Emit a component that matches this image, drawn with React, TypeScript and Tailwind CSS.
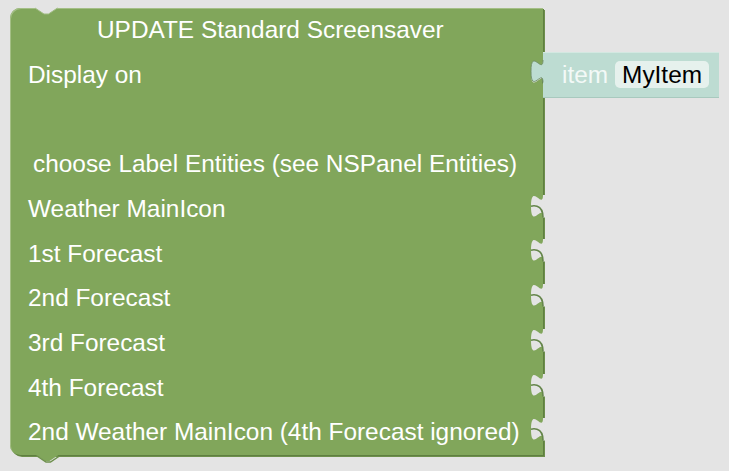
import React from 'react';

const inputs = [
  { label: 'Weather MainIcon' },
  { label: '1st Forecast' },
  { label: '2nd Forecast' },
  { label: '3rd Forecast' },
  { label: '4th Forecast' },
  { label: '2nd Weather MainIcon (4th Forecast ignored)' },
];

// blockly puzzle tab, right edge at x=8, drawn downward
const TAB = 'M8,0 C8,10 0,-8.5 0,7.5 S8,5 8,15';

// puzzle socket cut into the right edge of the block
const Socket: React.FC = () => (
  <svg
    className="absolute right-[-2px] top-[8px] overflow-visible"
    width="14"
    height="22.5"
    viewBox="0 0 9.33 15"
  >
    <path d={`${TAB} L9.33,15 L9.33,0 Z`} fill="#e4e4e4" />
    <path d="M0,7.5 S8,5 8,15" fill="none" stroke="#64854a" strokeWidth="1.1" />
  </svg>
);

const Row: React.FC<{ children?: React.ReactNode; socket?: boolean; className?: string }> = ({ children, socket, className }) => (
  <div className={`relative h-[44.7px] flex items-center ${className || ''}`}>
    {children}
    {socket && <Socket />}
  </div>
);

export default function App() {
  return (
    <div className="min-h-screen w-full bg-[#e4e4e4] font-['Liberation_Sans',Arial,sans-serif] text-[24.4px] leading-none">
      <div className="flex items-start pl-[10px] pt-[8px]">
        {/* main block */}
        <div className="relative w-[533px] bg-[#81a65b] rounded-l-[10px] shadow-[inset_1px_1px_0_#a4bf86,1px_1px_0_#5f7f40,2px_2px_0_#6d8f4c] text-white">
          {/* previous-statement notch */}
          <svg className="absolute left-[25px] top-[-1px]" width="23" height="7.5" viewBox="0 0 23 7.5">
            <path d="M0,0 L0,1 L9,7 L13.5,7 L22.5,1 L22.5,0 Z" fill="#e4e4e4" />
            <path d="M0,1 L9,7 L13.5,7 L22.5,1" fill="none" stroke="#9fbb80" strokeWidth="1" />
          </svg>

          <Row className="pl-[87px]">UPDATE Standard Screensaver</Row>
          <Row className="pl-[18px]" socket>Display on</Row>
          <Row />
          <Row className="pl-[23px]">choose Label Entities (see NSPanel Entities)</Row>
          {inputs.map((inp) => (
            <Row key={inp.label} className="pl-[18px]" socket>
              {inp.label}
            </Row>
          ))}

          {/* next-statement tab */}
          <svg className="absolute left-[26px] top-full" width="24" height="8" viewBox="0 0 24 8">
            <path d="M0,0 L9,6 L13.5,6 L22.5,0 Z" fill="#81a65b" />
            <path d="M1,1 L10,7 L14.5,7 L23.5,1" fill="none" stroke="#6d8f4c" strokeWidth="1.5" />
          </svg>
        </div>

        {/* attached value block */}
        <div className="relative mt-[44.3px] w-[176px] h-[45px] bg-[#bddcd2] shadow-[inset_0_1px_0_#d3e8e1,0_1px_0_#a8c9be] flex items-center pl-[19px] gap-[7px]">
          <svg
            className="absolute left-[-12px] top-[8px] overflow-visible"
            width="14"
            height="22.5"
            viewBox="0 0 9.33 15"
          >
            <path d={`${TAB} L9.33,15 L9.33,0 Z`} fill="#bddcd2" />
            <path d={TAB} fill="none" stroke="#6f8f66" strokeWidth="0.6" />
          </svg>
          <span className="text-[#f3f9f7]">item</span>
          <span className="h-[27px] px-[7px] flex items-center rounded-[5px] bg-[#e6f1ed] text-black">MyItem</span>
        </div>
      </div>
    </div>
  );
}
